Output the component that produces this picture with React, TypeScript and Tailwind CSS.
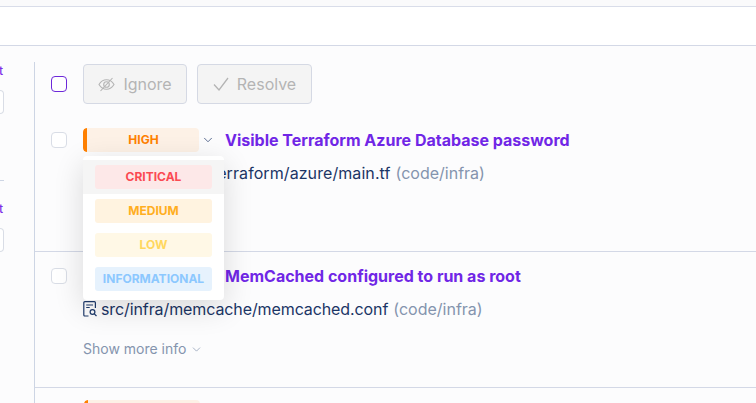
import { ChevronDown } from "lucide-react";

const font = { fontFamily: "Inter, sans-serif" };

const severities = [
  { label: "CRITICAL", cls: "bg-[#fde8e8] text-[#fb4a52]", row: "bg-[#f5f5f5]" },
  { label: "MEDIUM", cls: "bg-[#fff3e0] text-[#ffae1f]", row: "" },
  { label: "LOW", cls: "bg-[#fff8e6] text-[#ffd75e]", row: "" },
  { label: "INFORMATIONAL", cls: "bg-[#e6f2fd] text-[#8cc8ff]", row: "" },
];

const FileIcon = () => (
  <svg width="15" height="16" viewBox="0 0 15 16" fill="none" stroke="#1e3a6b" strokeWidth="1.2" className="shrink-0">
    <path d="M5.5 15H1.8a1 1 0 0 1-1-1V1.7a1 1 0 0 1 1-1h9.6a1 1 0 0 1 1 1V7" />
    <path d="M3.2 4h6.8M3.2 6.5h3.5" />
    <circle cx="9.5" cy="11" r="2.4" />
    <path d="M11.3 12.8l2.2 2.2" />
  </svg>
);

const EyeSlash = () => (
  <svg width="17" height="15" viewBox="0 0 17 15" fill="none" stroke="currentColor" strokeWidth="1.1">
    <path d="M1 7.5C3 4.2 5.6 2.8 8.5 2.8s5.5 1.4 7.5 4.7c-2 3.3-4.6 4.7-7.5 4.7S3 10.8 1 7.5z" />
    <circle cx="8.5" cy="7.5" r="2.8" />
    <path d="M2.5 14L14.5 1" />
  </svg>
);

const CheckMark = () => (
  <svg width="16" height="14" viewBox="0 0 16 14" fill="none" stroke="currentColor" strokeWidth="1.3">
    <path d="M1 7.5l5 5.5L15 1" />
  </svg>
);

const Checkbox = ({ active }: { active?: boolean }) => (
  <div
    className={
      active
        ? "w-4 h-4 rounded-[4px] border border-[#6d28d9] bg-white"
        : "w-4 h-4 rounded-[4px] border border-[#d9dde6] bg-white"
    }
  />
);

const Badge = () => (
  <div className="flex w-[116px] h-6 rounded-[4px] bg-[#fdf1e6] overflow-hidden">
    <div className="w-1 h-full bg-[#ff8000] rounded-l-[4px]" />
    <div className="flex-1 pl-px text-center text-xs leading-[23px] font-bold text-[#ff8000]">HIGH</div>
  </div>
);

const Sidebar = () => (
  <div className="w-[35px] shrink-0 mt-4 border-r border-[#cdd5e4] flex flex-col">
    <div className="h-[119px] border-b border-[#cdd5e4] w-[4px] flex flex-col">
      <span className="text-xs leading-none font-medium text-[#7c2ee8] mt-[3px] -ml-px">t</span>
      <div className="mt-[13px] w-[4px] h-6 border border-l-0 border-[#d9dde6] rounded-r-[4px] bg-white" />
    </div>
    <div className="w-[4px] mt-[22px]">
      <span className="block text-xs leading-none font-medium text-[#7c2ee8] -ml-px">t</span>
      <div className="mt-[13px] w-[4px] h-6 border border-l-0 border-[#d9dde6] rounded-r-[4px] bg-white" />
    </div>
  </div>
);

const Toolbar = () => (
  <div className="flex items-center h-10 mt-[18px] pl-4">
    <Checkbox active />
    <div className="flex gap-[10px] ml-4 text-base text-[#b4b4b4]">
      <div className="flex items-center gap-2 h-10 w-[104px] justify-center rounded-[4px] border border-[#d5d9e4] bg-[#f4f4f4]">
        <EyeSlash />
        <span>Ignore</span>
      </div>
      <div className="flex items-center gap-2 h-10 w-[115px] justify-center rounded-[4px] border border-[#d5d9e4] bg-[#f4f4f4]">
        <CheckMark />
        <span>Resolve</span>
      </div>
    </div>
  </div>
);

const Title = ({ text }: { text: string }) => (
  <div className="ml-[10px] text-base font-bold text-[#7026e6] whitespace-nowrap">{text}</div>
);

const Dropdown = () => (
  <div className="absolute left-0 top-[28px] w-[141px] z-10 bg-white rounded-[4px] shadow-[0_8px_30px_rgba(0,0,0,0.14)] py-1">
    {severities.map((s) => (
      <div key={s.label} className={`h-[34px] px-3 flex items-center ${s.row}`}>
        <div className={`w-[117px] h-6 rounded-[3px] text-center text-xs leading-6 font-bold ${s.cls}`}>
          {s.label}
        </div>
      </div>
    ))}
  </div>
);

export default function App() {
  return (
    <div className="w-[756px] h-[403px] overflow-hidden bg-[#fcfcfd] flex flex-col" style={font}>
      <div className="h-[7px] shrink-0 bg-[#fafafb] border-b border-[#d9dde9]" />
      <div className="h-[39px] shrink-0 bg-white border-b border-[#d3d8e6]" />
      <div className="flex flex-1">
        <Sidebar />
        <div className="flex-1 min-w-0">
          <Toolbar />
          <div className="h-[148px] border-b border-[#d3d8e6] pl-4 pt-6">
            <div className="flex">
              <div className="mt-1">
                <Checkbox />
              </div>
              <div className="ml-4 relative">
                <div className="flex items-center h-6">
                  <Badge />
                  <ChevronDown size={14} strokeWidth={1.3} className="ml-[2px] text-[#2b4272]" />
                  <Title text="Visible Terraform Azure Database password" />
                </div>
                <Dropdown />
                <div className="flex items-center mt-[9px] text-base text-[#1b3565] whitespace-nowrap">
                  <FileIcon />
                  <span className="ml-[3px] tracking-[0.08px]">src/infra/prod/terraform/azure/main.tf</span>
                  <span className="ml-[5px] text-[#8494ae]">(code/infra)</span>
                </div>
              </div>
            </div>
          </div>
          <div className="h-[136px] border-b border-[#d3d8e6] pl-4 pt-4">
            <div className="flex">
              <Checkbox />
              <div className="ml-4 relative -mt-1">
                <div className="flex items-center h-6">
                  <Badge />
                  <ChevronDown size={14} strokeWidth={1.3} className="ml-[2px] text-[#2b4272]" />
                  <Title text="MemCached configured to run as root" />
                </div>
                <div className="flex items-center mt-[9px] text-base text-[#1b3565] whitespace-nowrap">
                  <FileIcon />
                  <span className="ml-[3px] tracking-[-0.1px]">src/infra/memcache/memcached.conf</span>
                  <span className="ml-[5px] text-[#8494ae]">(code/infra)</span>
                </div>
                <div className="flex items-center mt-[18px] text-sm text-[#8494ae]">
                  <span>Show more info</span>
                  <ChevronDown size={13} strokeWidth={1.3} className="ml-1" />
                </div>
              </div>
            </div>
          </div>
          <div className="pl-[49px] pt-3">
            <Badge />
          </div>
        </div>
      </div>
    </div>
  );
}
